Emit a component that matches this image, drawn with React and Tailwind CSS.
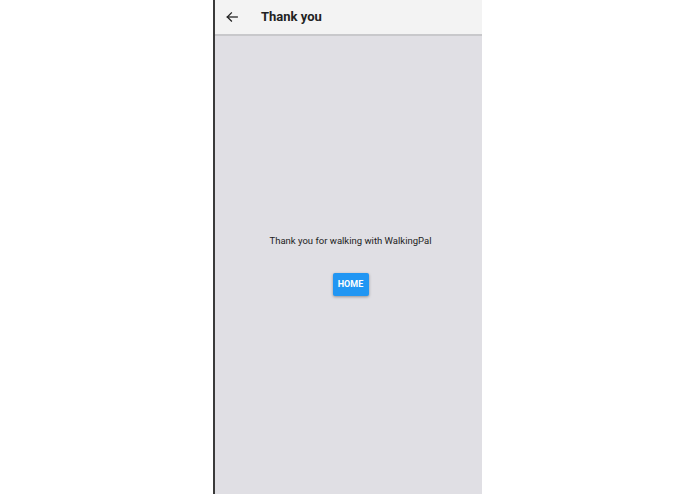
import React from "react";

function BackArrow() {
    return (
        <svg width="14" height="14" viewBox="0 0 24 24" fill="none" stroke="#222" strokeWidth="2.2" strokeLinecap="square">
            <path d="M21 12H4" />
            <path d="M11 5l-7 7 7 7" />
        </svg>
    );
}

export default function App() {
    return (
        <div className="w-[695px] h-[494px] bg-white flex" style={{ fontFamily: "Roboto, 'Liberation Sans', sans-serif" }}>
            <div className="w-[213px]" />
            <div className="w-[269px] h-full flex flex-col border-l-2 border-[#3a3a3a] bg-[#e0dfe4]">
                {/* App bar */}
                <div className="h-[36px] bg-[#f3f3f3] border-b-2 border-[#c8c8cb] flex items-center">
                    <div className="pl-[10px] pr-[22px] flex items-center">
                        <BackArrow />
                    </div>
                    <h1 className="text-[13px] font-bold text-[#222]">Thank you</h1>
                </div>

                {/* Body */}
                <div className="flex-1 flex flex-col items-center pt-[199px] pl-[4px]">
                    <p className="text-[9.5px] text-[#222] leading-[12px]">Thank you for walking with WalkingPal</p>
                    <button className="mt-[26px] w-[36px] h-[23px] bg-[#2196f3] text-white text-[9px] font-bold rounded-[2px] shadow-[0_1px_3px_rgba(0,0,0,0.35)] flex items-center justify-center">
                        HOME
                    </button>
                </div>
            </div>
        </div>
    );
}
